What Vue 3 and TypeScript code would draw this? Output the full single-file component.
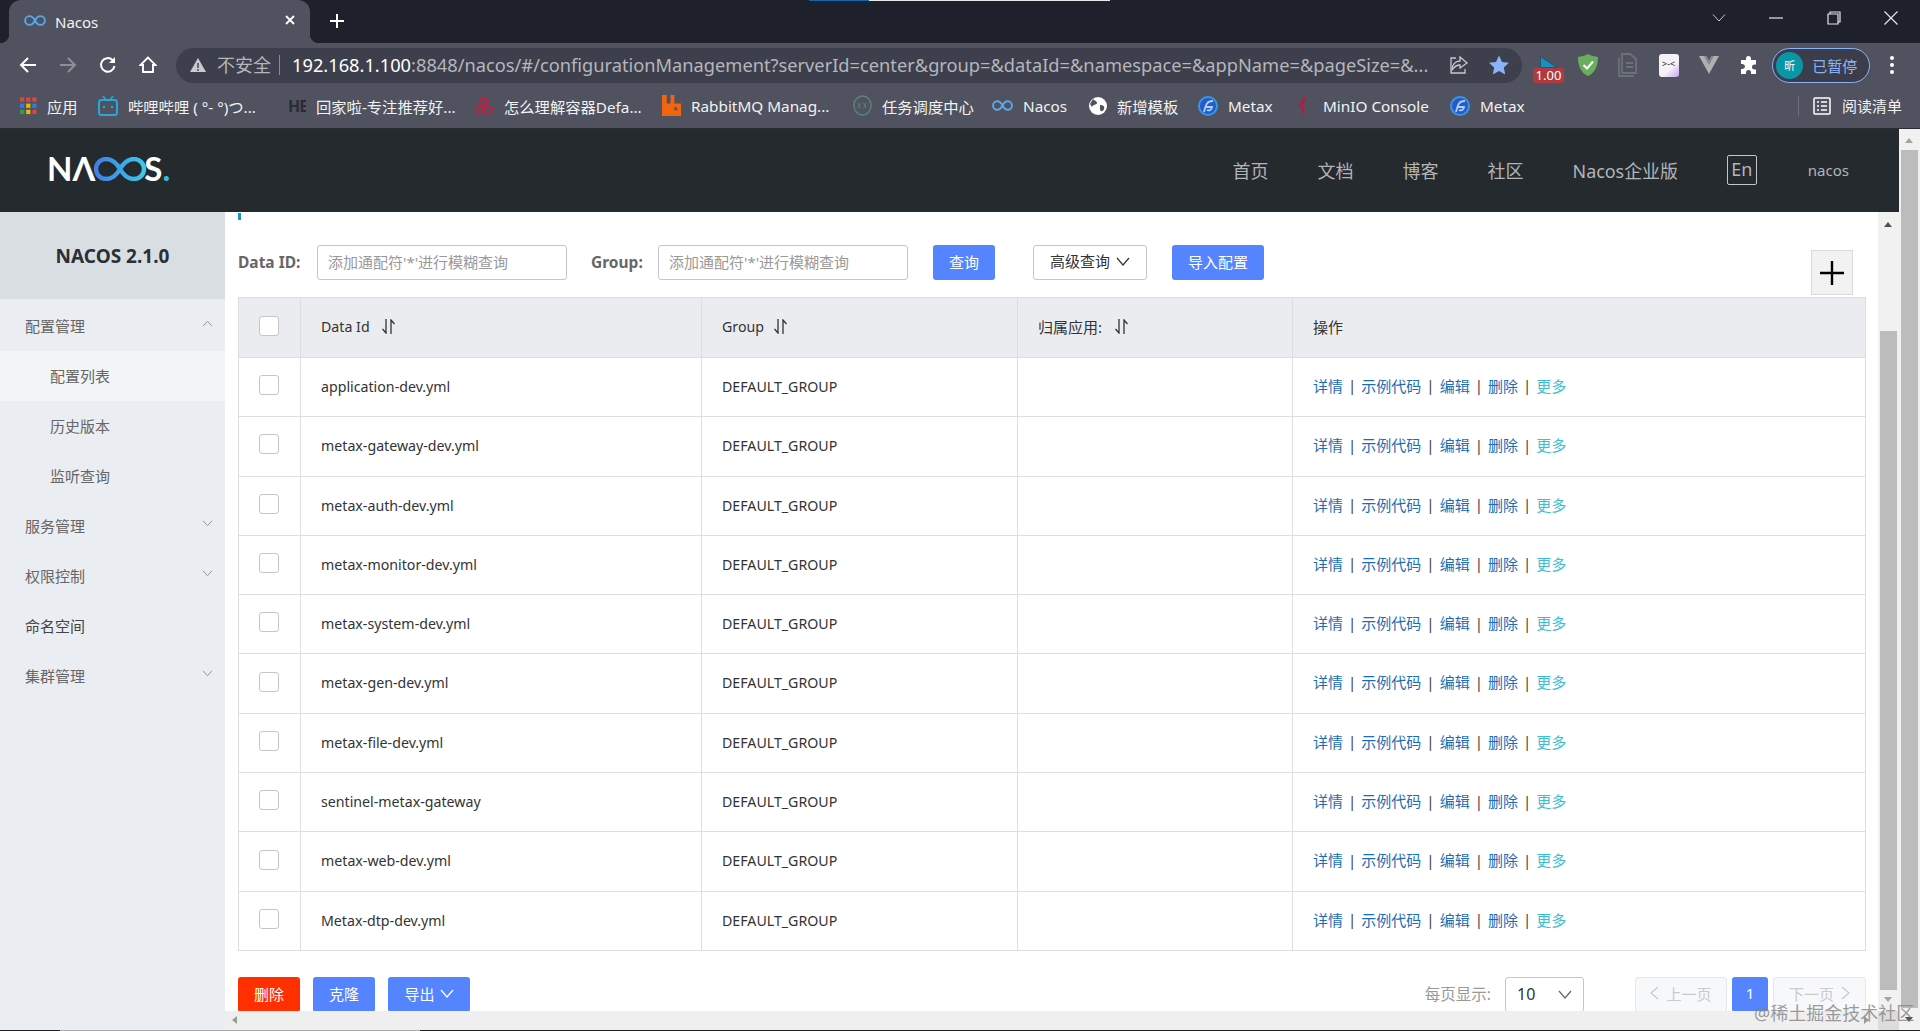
<script setup lang="ts">
interface Bookmark { icon: string; text: string; w: number }
const bookmarks: Bookmark[] = [
  { icon: 'apps', text: '应用', w: 78 },
  { icon: 'bili', text: '哔哩哔哩 ( °- °)つ...', w: 190 },
  { icon: 'he', text: '回家啦-专注推荐好...', w: 186 },
  { icon: 'rings', text: '怎么理解容器Defa...', w: 188 },
  { icon: 'rabbit', text: 'RabbitMQ Manag...', w: 191 },
  { icon: 'xxl', text: '任务调度中心', w: 139 },
  { icon: 'nacos', text: 'Nacos', w: 97 },
  { icon: 'globe', text: '新增模板', w: 109 },
  { icon: 'metax', text: 'Metax', w: 99 },
  { icon: 'minio', text: 'MinIO Console', w: 153 },
  { icon: 'metax', text: 'Metax', w: 90 },
]
const navs = ['首页', '文档', '博客', '社区']
const menu = [
  { text: '配置管理', arrow: 'up', sub: false, active: false, dark: false },
  { text: '配置列表', arrow: '', sub: true, active: true, dark: false },
  { text: '历史版本', arrow: '', sub: true, active: false, dark: false },
  { text: '监听查询', arrow: '', sub: true, active: false, dark: false },
  { text: '服务管理', arrow: 'down', sub: false, active: false, dark: false },
  { text: '权限控制', arrow: 'down', sub: false, active: false, dark: false },
  { text: '命名空间', arrow: '', sub: false, active: false, dark: true },
  { text: '集群管理', arrow: 'down', sub: false, active: false, dark: false },
]
const rows = [
  'application-dev.yml',
  'metax-gateway-dev.yml',
  'metax-auth-dev.yml',
  'metax-monitor-dev.yml',
  'metax-system-dev.yml',
  'metax-gen-dev.yml',
  'metax-file-dev.yml',
  'sentinel-metax-gateway',
  'metax-web-dev.yml',
  'Metax-dtp-dev.yml',
]
const actions = ['详情', '示例代码', '编辑', '删除']
const placeholder = "添加通配符'*'进行模糊查询"
</script>

<template>
  <div class="page">
    <div class="chrome">
      <div class="stripe"><i class="stripe-blue"></i><i class="stripe-white"></i></div>
      <div class="tabstrip">
        <div class="tab">
          <svg class="tab-ico" viewBox="0 0 24 12" width="22" height="11"><path d="M12 6C10 2 8 1.200 6 1.200A4.800 4.800 0 0 0 6 10.800C8 10.800 10 10 12 6C14 2 16 1.200 18 1.200A4.800 4.800 0 0 1 18 10.800C16 10.800 14 10 12 6Z" fill="none" stroke="#58a8f0" stroke-width="2"/></svg>
          <span class="tab-title">Nacos</span>
          <svg class="tab-x" viewBox="0 0 12 12" width="12" height="12"><path d="M2 2L10 10M10 2L2 10" stroke="#fff" stroke-width="1.800"/></svg>
        </div>
        <svg class="tab-plus" viewBox="0 0 16 16" width="16" height="16"><path d="M8 1V15M1 8H15" stroke="#fff" stroke-width="2"/></svg>
        <div class="win">
          <svg viewBox="0 0 14 10" width="14" height="10" class="w-chev"><path d="M1 1.500L7 8L13 1.500" fill="none" stroke="#c8c9ce" stroke-width="1"/></svg>
          <svg viewBox="0 0 14 14" width="14" height="14" class="w-min"><path d="M0 7H14" stroke="#e6e6e6" stroke-width="1.200"/></svg>
          <svg viewBox="0 0 14 14" width="14" height="14" class="w-max"><path d="M3 3V1H13V11H11M1 3H11V13H1Z" fill="none" stroke="#e6e6e6" stroke-width="1.200"/></svg>
          <svg viewBox="0 0 14 14" width="14" height="14" class="w-close"><path d="M0.500 0.500L13.500 13.500M13.500 0.500L0.500 13.500" stroke="#e6e6e6" stroke-width="1.200"/></svg>
        </div>
      </div>
      <div class="toolbar">
        <div class="nav-btns">
          <span class="nb"><svg viewBox="0 0 18 18" width="18" height="18"><path d="M17 9H2M9 2L2 9L9 16" fill="none" stroke="#fff" stroke-width="2"/></svg></span>
          <span class="nb"><svg viewBox="0 0 18 18" width="18" height="18"><path d="M1 9H16M9 2L16 9L9 16" fill="none" stroke="#8d8f97" stroke-width="2"/></svg></span>
          <span class="nb"><svg viewBox="0 0 18 18" width="18" height="18"><path d="M15.500 10A6.800 6.800 0 1 1 13.500 4" fill="none" stroke="#fff" stroke-width="2"/><path d="M16 1V7H10Z" fill="#fff"/></svg></span>
          <span class="nb"><svg viewBox="0 0 18 18" width="18" height="18"><path d="M9 1.500L1.500 9H4V16H14V9H16.500Z" fill="none" stroke="#fff" stroke-width="1.900"/></svg></span>
        </div>
        <div class="omni">
          <svg viewBox="0 0 16 14" width="16" height="14" class="warn"><path d="M8 0L16 14H0Z" fill="#c9cbd0"/><path d="M8 5V10M8 11V13" stroke="#3d404c" stroke-width="1.400"/></svg>
          <span class="insecure">不安全</span>
          <i class="omni-sep"></i>
          <span class="url"><b>192.168.1.100</b>:8848/nacos/#/configurationManagement?serverId=center&amp;group=&amp;dataId=&amp;namespace=&amp;appName=&amp;pageSize=&amp;...</span>
          <svg viewBox="0 0 20 20" width="20" height="20" class="share"><path d="M11 2L18 8L11 13V10C7 10 5 12 3 15C3 10 6 6 11 6Z" fill="none" stroke="#c4c6cb" stroke-width="1.300"/><path d="M7 3H2V18H16V14" fill="none" stroke="#c4c6cb" stroke-width="1.300"/></svg>
          <svg viewBox="0 0 20 20" width="20" height="20" class="star"><path d="M10 0.500L13 7L20 7.800L14.800 12.500L16.200 19.500L10 16L3.800 19.500L5.200 12.500L0 7.800L7 7Z" fill="#8ab4f8"/></svg>
        </div>
        <div class="exts">
          <span class="ext speed">
            <svg viewBox="0 0 18 12" width="18" height="12"><path d="M0.500 0.500L17 11.500H0.500Z" fill="#1690c0" stroke="#0c4a66" stroke-width="0.600"/></svg>
            <em>1.00</em>
          </span>
          <span class="ext"><svg viewBox="0 0 20 22" width="20" height="22"><path d="M10 0C13 2 17 2.500 20 3C20 12 17 19 10 22C3 19 0 12 0 3C3 2.500 7 2 10 0Z" fill="#68ae5c"/><path d="M5.500 11L9 14.500L15 7.500" fill="none" stroke="#fff" stroke-width="2"/></svg></span>
          <span class="ext"><svg viewBox="0 0 20 24" width="20" height="24"><path d="M2 6H1V23H15V22M4 1H12L18 6V20H4Z" fill="none" stroke="#6d7078" stroke-width="1.800"/><path d="M8 10H15M8 14H15" stroke="#6d7078" stroke-width="1.800"/></svg></span>
          <span class="ext"><span class="face">&gt;-&lt;</span></span>
          <span class="ext"><svg viewBox="0 0 20 18" width="20" height="18"><path d="M0 0H7.500L10 5L12.500 0H20L10 18Z" fill="#aeb0b3"/><path d="M5 0H7.500L10 5L12.500 0H15L10 9Z" fill="#85878c"/></svg></span>
          <span class="ext"><svg viewBox="0 0 20 20" width="20" height="20"><path d="M7 3.500A2.500 2.500 0 0 1 12 3.500V5H17V9.500H15.500A2.500 2.500 0 0 0 15.500 14.500H17V19H12V17.500A2.500 2.500 0 0 0 7 17.500V19H2V14H3.500A2.500 2.500 0 0 0 3.500 9H2V5H7Z" fill="#fff"/></svg></span>
        </div>
        <div class="pill"><span class="avatar">昕</span><span class="paused">已暂停</span></div>
        <div class="dots"><i></i><i></i><i></i></div>
      </div>
      <div class="bookmarks">
        <div v-for="(b, i) in bookmarks" :key="i" class="bm" :style="{ width: b.w + 'px' }">
          <span class="bm-ico" :class="{ 'bm-minio': b.icon === 'minio' }">
            <svg v-if="b.icon === 'apps'" viewBox="0 0 18 18" width="17" height="18">
              <rect x="0" y="0" width="4.500" height="4.500" fill="#d8483b"/><rect x="6.500" y="0" width="4.500" height="4.500" fill="#d8483b"/><rect x="13" y="0" width="4.500" height="4.500" fill="#d8483b"/>
              <rect x="0" y="6.500" width="4.500" height="4.500" fill="#3b78e0"/><rect x="6.500" y="6.500" width="4.500" height="4.500" fill="#f0b400"/><rect x="13" y="6.500" width="4.500" height="4.500" fill="#3b78e0"/>
              <rect x="0" y="13" width="4.500" height="4.500" fill="#2f9e55"/><rect x="6.500" y="13" width="4.500" height="4.500" fill="#f0b400"/><rect x="13" y="13" width="4.500" height="4.500" fill="#d8483b"/>
            </svg>
            <svg v-else-if="b.icon === 'bili'" viewBox="0 0 20 20" width="20" height="20"><path d="M5 0L8 4M15 0L12 4" stroke="#29a7d8" stroke-width="1.600"/><rect x="1" y="4" width="18" height="15" rx="2.500" fill="none" stroke="#29a7d8" stroke-width="2"/><path d="M6 10V12M14 10V12" stroke="#29a7d8" stroke-width="2"/></svg>
            <span v-else-if="b.icon === 'he'" class="he">HE</span>
            <svg v-else-if="b.icon === 'rings'" viewBox="0 0 22 22" width="20" height="20"><circle cx="11" cy="6" r="4" fill="none" stroke="#b82345" stroke-width="2.400"/><circle cx="6" cy="15" r="4" fill="none" stroke="#b82345" stroke-width="2.400"/><circle cx="16" cy="15" r="4" fill="none" stroke="#b82345" stroke-width="2.400"/></svg>
            <svg v-else-if="b.icon === 'rabbit'" viewBox="0 0 20 22" width="19" height="21"><path d="M0 0H5V9H9V0H13V9H20V22H0Z" fill="#f0650e"/><rect x="13" y="13" width="3" height="3" fill="#50535f"/></svg>
            <svg v-else-if="b.icon === 'xxl'" viewBox="0 0 20 22" width="19" height="21"><ellipse cx="10" cy="11" rx="9" ry="10" fill="none" stroke="#5d8480" stroke-width="1.400"/><path d="M5 8L8 14M8 8L5 14M11 8L14 14M14 8L11 14" stroke="#5d8480" stroke-width="0.800"/></svg>
            <svg v-else-if="b.icon === 'nacos'" viewBox="0 0 24 12" width="21" height="11"><path d="M12 6C10 2 8 1.200 6 1.200A4.800 4.800 0 0 0 6 10.800C8 10.800 10 10 12 6C14 2 16 1.200 18 1.200A4.800 4.800 0 0 1 18 10.800C16 10.800 14 10 12 6Z" fill="none" stroke="#58a8f0" stroke-width="2.200"/></svg>
            <svg v-else-if="b.icon === 'globe'" viewBox="0 0 18 18" width="18" height="18"><circle cx="9" cy="9" r="9" fill="#fff"/><path d="M4 2C6 4 8 4 8 6C8 8 4 7 3 10L1 7ZM11 8C14 8 16 9 15 12C14 15 11 15 11 12Z" fill="#50535f"/></svg>
            <svg v-else-if="b.icon === 'metax'" viewBox="0 0 20 20" width="20" height="20"><circle cx="10" cy="10" r="9" fill="#2f55c8" stroke="#2f9be8" stroke-width="2"/><path d="M6 16C8 8 9 5 15 5M8 11H14C14 14 11 15 9 14" fill="none" stroke="#9fd8f8" stroke-width="1.800"/></svg>
            <svg v-else viewBox="0 0 10 20" width="10" height="20"><path d="M7 0L9 5L5 9L8 13L5 20L5 13L1 10Z" fill="#a82048"/></svg>
          </span>
          <span class="bm-text">{{ b.text }}</span>
        </div>
        <div class="reading">
          <i class="reading-sep"></i>
          <svg viewBox="0 0 18 18" width="18" height="18"><rect x="1" y="1" width="16" height="16" rx="1" fill="none" stroke="#fff" stroke-width="1.500"/><path d="M4 5H6M8 5H14M4 9H6M8 9H14M4 13H6M8 13H14" stroke="#fff" stroke-width="1.400"/></svg>
          <span>阅读清单</span>
        </div>
      </div>
    </div>

    <div class="site">
      <div class="site-main">
        <header class="head">
          <div class="logo">
            <span>N&#923;</span>
            <svg viewBox="0 0 54 24" width="54" height="24" class="logo-inf">
              <defs><linearGradient id="lg" x1="0" x2="1" y1="0" y2="0"><stop offset="0" stop-color="#3f7fe8"/><stop offset="1" stop-color="#3cc8e8"/></linearGradient></defs>
              <path d="M27 12C23 5 19 2 13 2A10 10 0 0 0 13 22C19 22 23 19 27 12C31 5 35 2 41 2A10 10 0 0 1 41 22C35 22 31 19 27 12Z" fill="none" stroke="url(#lg)" stroke-width="4.400"/>
            </svg>
            <span class="logo-s">S</span><span class="logo-dot">.</span>
          </div>
          <nav class="topnav">
            <a v-for="n in navs" :key="n" class="nav-item">{{ n }}</a>
            <a class="ent">Nacos企业版</a>
            <span class="lang">En</span>
            <span class="user">nacos</span>
          </nav>
        </header>
        <div class="site-body">
          <aside class="side">
            <div class="side-title">NACOS 2.1.0</div>
            <div
              v-for="m in menu"
              :key="m.text"
              class="mi"
              :class="{ 'mi-sub': m.sub, 'mi-active': m.active, 'mi-dark': m.dark }"
            >
              <span class="mi-text">{{ m.text }}</span>
              <svg v-if="m.arrow === 'down'" viewBox="0 0 12 8" width="11" height="7" class="mi-arrow"><path d="M1 1L6 6.500L11 1" fill="none" stroke="#8d9298" stroke-width="1.100"/></svg>
              <svg v-if="m.arrow === 'up'" viewBox="0 0 12 8" width="11" height="7" class="mi-arrow"><path d="M1 7L6 1.500L11 7" fill="none" stroke="#8d9298" stroke-width="1.100"/></svg>
            </div>
          </aside>
          <div class="work">
            <div class="work-row">
              <main class="content">
                <i class="tick"></i>
                <div class="search">
                  <label class="lab">Data ID:</label>
                  <div class="inp first">{{ placeholder }}</div>
                  <label class="lab lab2">Group:</label>
                  <div class="inp">{{ placeholder }}</div>
                  <button class="btn pri query">查询</button>
                  <button class="btn adv">高级查询
                    <svg viewBox="0 0 14 9" width="14" height="9"><path d="M1 1L7 8L13 1" fill="none" stroke="#333" stroke-width="1.200"/></svg>
                  </button>
                  <button class="btn pri imp">导入配置</button>
                </div>
                <div class="plus"><svg viewBox="0 0 26 26" width="26" height="26"><path d="M13 1V25M1 13H25" stroke="#000" stroke-width="2.400"/></svg></div>
                <div class="tbl">
                  <div class="tr th">
                    <div class="td c0"><i class="cb"></i></div>
                    <div class="td">Data Id
                      <svg class="sort sort-a" viewBox="0 0 13 15" width="13" height="15"><path d="M4 0V14L0.500 10M9 15V1L12.500 5" fill="none" stroke="#333" stroke-width="1.300"/></svg>
                    </div>
                    <div class="td">Group
                      <svg class="sort" viewBox="0 0 13 15" width="13" height="15"><path d="M4 0V14L0.500 10M9 15V1L12.500 5" fill="none" stroke="#333" stroke-width="1.300"/></svg>
                    </div>
                    <div class="td cjk">归属应用:
                      <svg class="sort" viewBox="0 0 13 15" width="13" height="15"><path d="M4 0V14L0.500 10M9 15V1L12.500 5" fill="none" stroke="#333" stroke-width="1.300"/></svg>
                    </div>
                    <div class="td cjk">操作</div>
                  </div>
                  <div v-for="r in rows" :key="r" class="tr">
                    <div class="td c0"><i class="cb"></i></div>
                    <div class="td">{{ r }}</div>
                    <div class="td">DEFAULT_GROUP</div>
                    <div class="td"></div>
                    <div class="td acts">
                      <template v-for="a in actions" :key="a">
                        <a>{{ a }}</a><span class="pipe">|</span>
                      </template>
                      <a class="more">更多</a>
                    </div>
                  </div>
                </div>
                <div class="foot">
                  <button class="btn danger">删除</button>
                  <button class="btn pri clone">克隆</button>
                  <button class="btn pri export">导出
                    <svg viewBox="0 0 14 9" width="14" height="9"><path d="M1 1L7 8L13 1" fill="none" stroke="#fff" stroke-width="1.300"/></svg>
                  </button>
                  <span class="per">每页显示:</span>
                  <div class="sel"><span>10</span>
                    <svg viewBox="0 0 14 9" width="14" height="9"><path d="M1 1L7 8L13 1" fill="none" stroke="#666" stroke-width="1.200"/></svg>
                  </div>
                  <div class="pg prev"><svg viewBox="0 0 9 14" width="9" height="14"><path d="M8 1L1 7L8 13" fill="none" stroke="#c8cacd" stroke-width="1.300"/></svg>上一页</div>
                  <div class="pg cur">1</div>
                  <div class="pg next">下一页<svg viewBox="0 0 9 14" width="9" height="14"><path d="M1 1L8 7L1 13" fill="none" stroke="#c8cacd" stroke-width="1.300"/></svg></div>
                </div>
              </main>
              <div class="vbar">
                <i class="up"></i>
                <i class="vthumb"></i>
                <i class="down"></i>
              </div>
            </div>
            <div class="hbar">
              <i class="left"></i>
              <i class="right"></i>
              <i class="corner"></i>
            </div>
          </div>
        </div>
      </div>
      <div class="obar">
        <i class="up"></i>
        <i class="othumb"></i>
        <i class="down"></i>
      </div>
    </div>
    <div class="bottomline"></div>
    <div class="mark">@稀土掘金技术社区</div>
  </div>
</template>

<style>
html, body { margin: 0; padding: 0; overflow: hidden; background: #fff; }
</style>

<style scoped>
.page {
  position: relative;
  width: 1920px;
  height: 1031px;
  display: flex;
  flex-direction: column;
  overflow: hidden;
  font-family: "Noto Sans", "Noto Sans CJK SC", sans-serif;
  font-size: 14px;
  color: #333;
}
i, em { font-style: normal; display: block; }

/* browser chrome */
.chrome { height: 129px; background: #50535f; display: flex; flex-direction: column; flex: none; position: relative; border-bottom: 1px solid #2a2c33; box-sizing: border-box; }
.stripe { position: absolute; top: 0; left: 809px; display: flex; height: 1px; z-index: 2; }
.stripe-blue { width: 60px; background: #0f68ad; }
.stripe-white { width: 241px; background: #e8e8e8; }
.tabstrip { height: 43px; background: #1e212c; display: flex; align-items: flex-start; flex: none; }
.tab {
  margin-left: 9px; width: 301px; height: 43px; background: #50535f;
  border-radius: 12px 12px 0 0; position: relative; display: flex; align-items: center;
  padding-left: 15px; box-sizing: border-box;
}
.tab::before, .tab::after { content: ""; position: absolute; bottom: 0; width: 9px; height: 9px; }
.tab::before { left: -9px; background: radial-gradient(circle at 0 0, transparent 9px, #50535f 9.500px); }
.tab::after { right: -9px; background: radial-gradient(circle at 100% 0, transparent 9px, #50535f 9.500px); }
.tab-ico { flex: none; margin-top: -3px; }
.tab-title { color: #f2f2f2; font-size: 15px; margin-left: 9px; }
.tab-x { margin-left: auto; margin-right: 14px; margin-top: -3px; }
.tab-plus { margin: 13px 0 0 19px; }
.win { margin-left: auto; height: 36px; display: flex; align-items: center; }
.w-chev { margin-right: 43px; }
.w-min { margin-right: 44px; }
.w-max { margin-right: 43px; }
.w-close { margin-right: 22px; }

.toolbar { height: 42px; display: flex; align-items: center; flex: none; padding-top: 2px; box-sizing: border-box; }
.nav-btns { display: flex; padding-left: 8px; width: 176px; box-sizing: border-box; flex: none; }
.nb { width: 40px; display: flex; justify-content: center; }
.omni { width: 1346px; height: 35px; border-radius: 18px; background: #3d404c; display: flex; align-items: center; box-sizing: border-box; padding-left: 14px; flex: none; color: #b4b6bc; }
.warn { flex: none; }
.insecure { margin-left: 11px; font-size: 18px; flex: none; line-height: 1; width: 54px; white-space: nowrap; color: #b4b6bc; }
.omni-sep { width: 1px; height: 20px; background: #8b8d94; margin-left: 8px; flex: none; }
.url { margin: -1px 0 0 12px; font-size: 18.250px; white-space: nowrap; overflow: hidden; width: 1140px; flex: none; }
.url b { color: #fff; font-weight: 400; }
.share { margin-left: 17px; flex: none; }
.star { margin-left: 20px; flex: none; }
.exts { display: flex; margin-left: 6px; flex: none; }
.ext { width: 40.200px; height: 35px; display: flex; align-items: center; justify-content: center; position: relative; }
.speed svg { position: absolute; left: 12px; top: 8px; }
.speed em { position: absolute; left: 5px; top: 20px; width: 31px; height: 15px; line-height: 15px; text-align: center; background: #b03a3e; color: #fff; font-size: 13px; border-radius: 2px; }
.face { width: 20px; height: 23px; border-radius: 3px; background: linear-gradient(135deg, #f4f2f6 60%, #c9a6ec); color: #222; font-size: 9px; line-height: 20px; text-align: center; display: block; overflow: hidden; }
.pill { margin-left: 3px; width: 98px; height: 35px; border-radius: 18px; border: 1px solid #8ab4f8; background: #3b3e4a; box-sizing: border-box; display: flex; align-items: center; flex: none; }
.avatar { width: 27px; height: 27px; border-radius: 50%; background: #0a97a5; color: #fff; font-size: 11px; text-align: center; line-height: 27px; margin-left: 3px; }
.paused { color: #8ab4f8; font-size: 15px; margin-left: 9px; }
.dots { margin-left: 20px; width: 4px; display: flex; flex-direction: column; gap: 3px; }
.dots i { width: 4px; height: 4px; border-radius: 50%; background: #fff; }

.bookmarks { height: 43px; display: flex; align-items: center; padding: 0 0 2px 20px; box-sizing: border-box; flex: none; color: #f2f2f2; font-size: 15.300px; }
.bm { display: flex; align-items: center; flex: none; white-space: nowrap; }
.bm-ico { display: flex; align-items: center; justify-content: flex-start; margin-right: 10px; flex: none; }
.bm-minio { margin-right: 16px; margin-left: 0; }
.he { color: #2a2c34; font-weight: 700; font-size: 16px; width: 18px; letter-spacing: -1px; white-space: nowrap; overflow: hidden; }
.reading { margin-left: auto; display: flex; align-items: center; flex: none; padding-right: 18px; }
.reading-sep { width: 1px; height: 20px; background: #6c6f79; margin-right: 14px; }
.reading span { margin-left: 11px; font-size: 15px; }

/* site */
.site { flex: 1; min-height: 0; display: flex; }
.site-main { flex: 1; min-width: 0; display: flex; flex-direction: column; }
.head { height: 83px; background: #252a2f; display: flex; align-items: center; flex: none; }
.logo { margin-left: 47px; display: flex; align-items: center; color: #fff; font-family: "Lato", sans-serif; font-size: 33px; line-height: 1; font-weight: 700; letter-spacing: 0; margin-top: -4px; }
.logo-inf { margin: 0 -3px 0 -2px; flex: none; }
.logo-dot { color: #2cc3dc; }
.topnav { margin-left: auto; display: flex; align-items: center; color: #b2b4b6; font-size: 18px; padding-bottom: 2px; }
.nav-item { display: block; width: 85px; white-space: nowrap; }
.ent { display: block; white-space: nowrap; font-size: 17.900px; }
.lang { margin-left: 49px; width: 30px; height: 30px; box-sizing: border-box; border: 1px solid #c4c6c8; border-radius: 2px; text-align: center; line-height: 26px; font-size: 18px; color: #b2b4b6; }
.user { margin-left: 51px; margin-right: 50px; font-size: 15px; }

.site-body { flex: 1; min-height: 0; display: flex; }
.side { width: 225px; flex: none; background: #eaedf1; }
.side-title { height: 87px; background: #d9dee3; text-align: center; font-size: 19px; font-weight: 700; color: #2c2f33; line-height: 88px; margin-bottom: 2px; }
.mi { height: 50px; display: flex; align-items: center; padding: 0 12px 0 25px; color: #666; font-size: 15px; justify-content: space-between; box-sizing: border-box; }
.mi-text { margin-top: -2px; }
.mi-sub { padding-left: 50px; }
.mi-active { background: #f2f5f6; }
.mi-dark { color: #444; }
.mi-arrow { margin-top: -6px; }

.work { flex: 1; min-width: 0; display: flex; flex-direction: column; }
.work-row { flex: 1; min-height: 0; display: flex; }
.content { flex: 1; min-width: 0; overflow: hidden; padding: 33px 12px 0 13px; box-sizing: border-box; position: relative; background: #fff; }
.tick { position: absolute; left: 13px; top: 1px; width: 3px; height: 7px; background: #1398c9; }
.search { display: flex; align-items: center; height: 35px; }
.lab { font-weight: 700; font-size: 15.500px; color: #666; width: 79px; white-space: nowrap; flex: none; margin-top: -2px; }
.lab2 { width: 67px; margin: -2px 0 0 24px; }
.inp { width: 250px; height: 35px; border: 1px solid #c4c6cf; border-radius: 3px; box-sizing: border-box; line-height: 32px; padding-left: 10px; color: #999; font-size: 15px; flex: none; white-space: nowrap; overflow: hidden; }
.btn { height: 35px; border: 0; border-radius: 3px; font: inherit; font-size: 15px; color: #fff; padding: 0 0 2px; display: flex; align-items: center; justify-content: center; flex: none; box-sizing: border-box; }
.pri { background: #5584ff; }
.danger { background: #ff3000; width: 62px; }
.query { width: 62px; margin-left: 25px; }
.adv { width: 114px; margin-left: 38px; background: #fff; color: #333; border: 1px solid #c4c6cf; gap: 6px; align-items: center; padding-bottom: 4px; }
.adv svg { margin-top: 2px; }
.imp { width: 92px; margin-left: 25px; }
.plus { position: absolute; left: 1586px; top: 38px; width: 42px; height: 45px; background: #f2f2f2; border: 1px solid #dcdcdc; box-sizing: border-box; display: flex; align-items: center; justify-content: center; }

.tbl { margin-top: 17px; border: 1px solid #dcdee3; border-width: 1px 1px 0 1px; width: 1628px; box-sizing: border-box; }
.tr { display: grid; grid-template-columns: 61px 401px 316px 275px 1fr; height: 59.300px; border-bottom: 1px solid #dcdee3; box-sizing: border-box; }
.th { height: 60px; background: #ebecf0; }
.td { border-left: 1px solid #dcdee3; padding: 0 0 1.400px 20px; display: flex; align-items: center; white-space: nowrap; font-size: 14.200px; box-sizing: border-box; min-width: 0; }
.th .td { padding-bottom: 2px; }
.td.cjk { font-size: 15px; }
.td.cjk .sort { margin-left: 13px; }
.td.c0 { border-left: 0; padding: 0 2px 0 0; justify-content: center; }
.cb { width: 20px; height: 20px; border: 1px solid #c4c6cf; border-radius: 3px; background: #fff; box-sizing: border-box; margin-top: -4px; }
.sort { margin-left: 10px; flex: none; }
.sort-a { margin-left: 12px; }
.td.acts { font-size: 15px; padding-bottom: 3.400px; }
.acts a { color: #1b6eb5; }
.acts .more { color: #3cbfd4; }
.pipe { width: 18.300px; text-align: center; color: #444; font-size: 15px; }

.foot { margin-top: 26px; display: flex; align-items: center; height: 35px; width: 1628px; }
.clone { width: 62px; margin-left: 13px; }
.export { width: 82px; margin-left: 13px; gap: 5px; }
.per { margin-left: auto; color: #999; font-size: 15.500px; padding-bottom: 2px; }
.sel { width: 79px; height: 35px; margin-left: 14px; border: 1px solid #c4c6cf; border-radius: 3px; box-sizing: border-box; display: flex; align-items: center; justify-content: space-between; padding: 0 11px; flex: none; font-size: 16px; }
.pg { height: 35px; border-radius: 3px; display: flex; align-items: center; justify-content: center; box-sizing: border-box; flex: none; font-size: 15px; padding-bottom: 2px; }
.prev, .next { width: 92px; background: #f7f8fa; border: 1px solid #e6e7eb; color: #c8cacd; gap: 7px; }
.next { width: 93px; }
.prev { margin-left: 51px; }
.cur { width: 36px; background: #5584ff; color: #fff; margin: 0 5px; }

.vbar { width: 21px; flex: none; background: #f1f1f1; position: relative; }
.vthumb { position: absolute; left: 2px; top: 119px; width: 17px; height: 659px; background: #bcbcbc; }
.up, .down { position: absolute; left: 6px; width: 0; height: 0; border-left: 4.500px solid transparent; border-right: 4.500px solid transparent; }
.vbar .up { top: 10px; border-bottom: 5px solid #505050; }
.vbar .down { top: 785px; border-top: 5px solid #a3a3a3; }
.hbar { height: 19px; flex: none; background: #efefef; position: relative; }
.left, .right { position: absolute; top: 5px; width: 0; height: 0; border-top: 4.500px solid transparent; border-bottom: 4.500px solid transparent; }
.left { left: 7px; border-right: 5px solid #9a9a9a; }
.right { left: 1639px; border-left: 5px solid #9a9a9a; }
.corner { position: absolute; right: 0; top: 0; width: 21px; height: 19px; background: #dcdcdc; }
.obar { width: 21px; flex: none; background: #f1f1f1; position: relative; }
.othumb { position: absolute; left: 2px; top: 21px; width: 17px; height: 858px; background: #bcbcbc; }
.obar .up { top: 9px; border-bottom: 5px solid #a3a3a3; }
.obar .down { top: 888px; border-top: 5px solid #505050; }
.bottomline { height: 1px; flex: none; background: linear-gradient(90deg, #222 60px, #aaa 60px, #aaa 420px, #222 420px); }
.mark { position: absolute; left: 1754px; top: 1001px; font-size: 18px; color: rgba(130, 130, 130, 0.8); white-space: nowrap; line-height: 24px; }
</style>
